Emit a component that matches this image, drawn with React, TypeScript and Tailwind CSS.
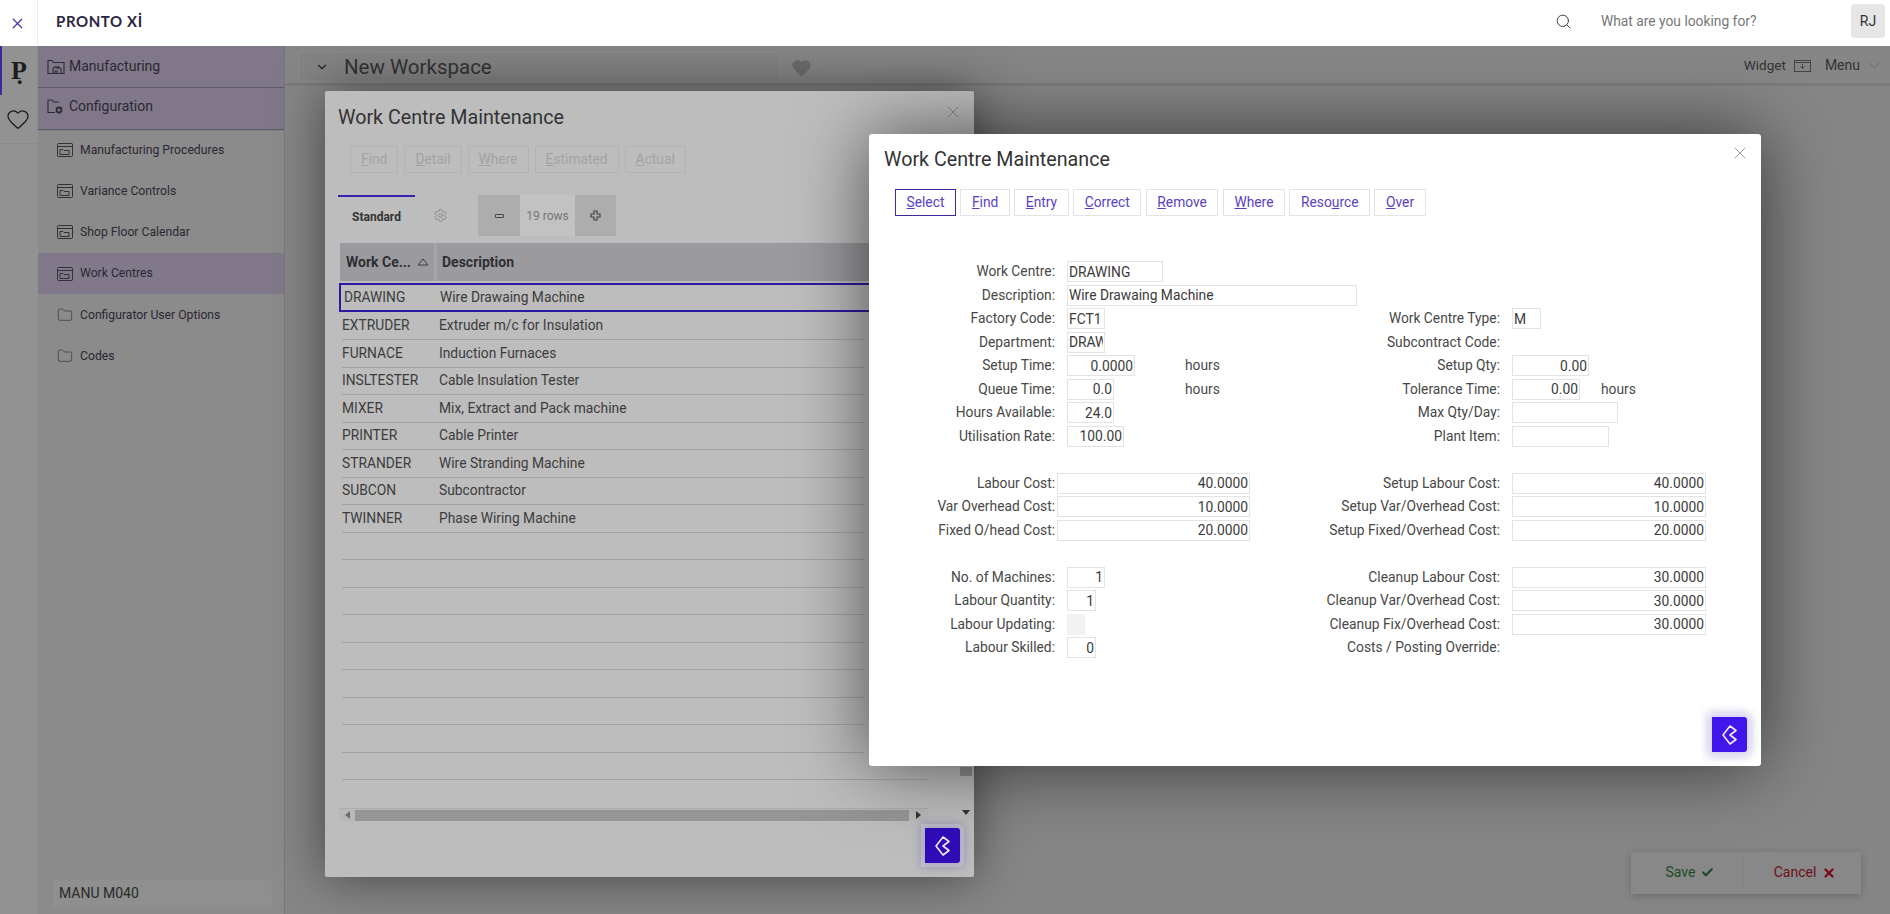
import { Check, ChevronDown, Folder, Heart, Search, Settings, X } from "lucide-react";

function WindowIcon() {
  return (
    <svg width="16" height="16" viewBox="0 0 16 16" fill="none" stroke="#33303a" strokeWidth="1" className="shrink-0">
      <rect x="0.5" y="1.5" width="15" height="13" rx="1" />
      <path d="M0.5 4.5h15" />
      <path d="M3 12.5v-5h3l1 1h5v4z" />
    </svg>
  );
}

function FactoryFolderIcon() {
  return (
    <svg width="18" height="16" viewBox="0 0 18 16" fill="none" stroke="#2e2a36" strokeWidth="1.1" className="shrink-0">
      <path d="M1 14.5v-13h4l1.5 2h10.5v11z" />
      <path d="M6 14.5v-5l2.5-2 2.500 2v-2l3 2v5" />
      <path d="M8 14.500v-2.500h2v2.500" />
    </svg>
  );
}

function GearFolderIcon() {
  return (
    <svg width="18" height="16" viewBox="0 0 18 16" fill="none" stroke="#2e2a36" strokeWidth="1.1" className="shrink-0">
      <path d="M8 13.500H1V1h4l1.500 2H12" />
      <circle cx="12" cy="11" r="2.500" strokeWidth="1.800" />
    </svg>
  );
}

function BackButton({ className }: { className: string }) {
  return (
    <button
      aria-label="Back"
      className={`absolute right-[14px] bottom-[14px] flex h-[35px] w-[35px] items-center justify-center rounded-r-[3px] shadow-[0_0_0_4px_rgba(255,255,255,0.22),0_0_10px_4px_rgba(60,40,160,0.3)] ${className}`}
    >
      <svg width="15" height="20" viewBox="0 0 15 20" fill="none" stroke="#f1edff" strokeWidth="1.600" strokeLinejoin="round">
        <path d="M8 1 1 10l7 9 6-4.500L8 10l6-4.500z" />
      </svg>
    </button>
  );
}

function ActionButton({ children, active }: { children: React.ReactNode; active?: boolean }) {
  return (
    <button
      className={`h-[27px] px-[10.500px] text-[13.800px] text-[#5a3fc6] ${active ? "border border-[#3b2ba3]" : "border border-[#e4e4e4]"}`}
    >
      {children}
    </button>
  );
}

function MutedButton({ children }: { children: React.ReactNode }) {
  return <button className="h-[27px] border border-[#b4b4b4] px-[10px] text-[13.800px] text-[#a3a3a3]">{children}</button>;
}

type FieldProps = {
  label?: string;
  value?: string;
  width?: string;
  right?: boolean;
  unit?: boolean;
  tight?: boolean;
  labelWidth: string;
  filled?: boolean;
};

function Field({ label, value = "", width, right, unit, tight, labelWidth, filled }: FieldProps) {
  return (
    <div className="flex h-[23.500px] items-center text-[13.800px] text-[#474747]">
      <span className={`shrink-0 text-right ${labelWidth}`}>{label}</span>
      {width && (
        <div className={`flex ${tight ? "ml-[2px]" : "ml-[12px]"} ${unit ? "w-[118px]" : ""}`}>
          <input
            readOnly
            value={value}
            aria-label={label}
            className={`h-[21px] px-[1px] text-[13.800px] text-[#3a3a3a] outline-none ${width} ${right ? "text-right" : ""} ${filled ? "bg-[#f2f2f2]" : "border border-[#e3e3e3]"}`}
          />
        </div>
      )}
      {unit && <span className="text-[#4a4a4a]">hours</span>}
    </div>
  );
}

const rows = [
  ["DRAWING", "Wire Drawaing Machine"],
  ["EXTRUDER", "Extruder m/c for Insulation"],
  ["FURNACE", "Induction Furnaces"],
  ["INSLTESTER", "Cable Insulation Tester"],
  ["MIXER", "Mix, Extract and Pack machine"],
  ["PRINTER", "Cable Printer"],
  ["STRANDER", "Wire Stranding Machine"],
  ["SUBCON", "Subcontractor"],
  ["TWINNER", "Phase Wiring Machine"],
  ...Array.from({ length: 9 }, () => ["", ""]),
];

const navItems = [
  { name: "Manufacturing Procedures", icon: "window" },
  { name: "Variance Controls", icon: "window" },
  { name: "Shop Floor Calendar", icon: "window" },
  { name: "Work Centres", icon: "window", active: true },
  { name: "Configurator User Options", icon: "folder" },
  { name: "Codes", icon: "folder" },
];

const LEFT = "w-[186px]";
const RIGHT = "w-[240px]";

function ListModal() {
  return (
    <section className="absolute top-[91px] left-[325px] flex h-[786px] w-[649px] flex-col rounded-[2px] bg-[#bdbdbd] pl-[13px] shadow-[0_0_50px_rgba(0,0,0,0.5)]">
      <h2 className="mt-[15px] h-[24px] text-[19.700px] leading-[24px] text-[#333]">Work Centre Maintenance</h2>
      <X size={20} strokeWidth={1} className="absolute top-[11px] right-[11px] text-[#808080]" />
      <div className="mt-[16px] ml-[12px] flex gap-[6px]">
        <MutedButton><u>F</u>ind</MutedButton>
        <MutedButton><u>D</u>etail</MutedButton>
        <MutedButton><u>W</u>here</MutedButton>
        <MutedButton><u>E</u>stimated</MutedButton>
        <MutedButton><u>A</u>ctual</MutedButton>
      </div>
      <div className="mt-[22px] flex h-[41px]">
        <div className="flex w-[77px] items-center justify-center border-t-2 border-[#3a20ae] text-[12px] font-bold text-[#333]">Standard</div>
        <div className="flex w-[63px] items-center justify-center pr-[12px]">
          <Settings size={15} strokeWidth={1} className="text-[#6e6e6e]" />
        </div>
        <button aria-label="Fewer rows" className="flex w-[42px] items-center justify-center bg-[#adadad]">
          <span className="h-[4px] w-[9px] rounded-[1px] border border-[#444]" />
        </button>
        <div className="flex w-[55px] items-center justify-center bg-[#c2c2c2] text-[12px] text-[#777]">19 rows</div>
        <button aria-label="More rows" className="flex w-[41px] items-center justify-center bg-[#adadad]">
          <svg width="11" height="11" viewBox="0 0 11 11" fill="none" stroke="#444" strokeWidth="1.200">
            <path d="M4 1h3v3h3v3H7v3H4V7H1V4h3z" />
          </svg>
        </button>
      </div>
      <div className="relative mt-[7px] ml-[2px] flex h-[38px] w-[618px] bg-[#9b9b9f] text-[14px] font-bold text-[#2f2f33]">
        <div className="flex w-[97px] items-center justify-between border-r-[3px] border-[#a5a5a8] pr-[5px] pl-[6px]">
          <span>Work Ce...</span>
          <svg width="12" height="8" viewBox="0 0 12 8" fill="none" stroke="#3a3a3a" strokeWidth="1">
            <path d="M6 1 1 7h10z" />
          </svg>
        </div>
        <div className="flex items-center pl-[5px]">Description</div>
      </div>
      <div className="mt-[2px] flex w-[631px] flex-col text-[13.800px] text-[#3c3c3c]">
        {rows.map(([code, desc], i) =>
          i === 0 ? (
            <div key={i} className="ml-[1px] flex h-[29px] items-center border-2 border-[#2a1aa0]">
              <span className="w-[99px] shrink-0 pl-[3px]">{code}</span>
              <span>{desc}</span>
            </div>
          ) : (
            <div key={i} className={`ml-[4px] flex items-center border-b border-[#a3a3a3] ${i === 1 ? "h-[28px]" : "h-[27.500px]"} ${i === 17 ? "w-[585px]" : "w-[522px]"}`}>
              <span className="w-[97px] shrink-0">{code}</span>
              <span>{desc}</span>
            </div>
          ),
        )}
      </div>
      <div className="mt-[28px] ml-[1px] flex h-[13px] w-[589px] items-center border-t border-[#adadad] bg-[#b8b8b8]">
        <span className="flex w-[16px] justify-center">
          <svg width="5" height="8" viewBox="0 0 5 8" fill="#6d6d6d"><path d="M5 0v8L0 4z" /></svg>
        </span>
        <span className="h-[11px] flex-1 bg-[#959595]" />
        <span className="flex w-[19px] justify-center">
          <svg width="5" height="8" viewBox="0 0 5 8" fill="#333"><path d="M0 0v8l5-4z" /></svg>
        </span>
      </div>
      <div className="absolute top-[676px] right-[2px] h-[9px] w-[12px] bg-[#8f8f8f]" />
      <svg width="8" height="5" viewBox="0 0 8 5" fill="#333" className="absolute top-[719px] right-[4px]"><path d="M0 0h8L4 5z" /></svg>
      <BackButton className="bg-[#2f0cb8]" />
    </section>
  );
}

function EditModal() {
  return (
    <section className="absolute top-[134px] left-[869px] h-[632px] w-[892px] rounded-[3px] bg-white pt-[14px] shadow-[0_0_75px_rgba(0,0,0,0.6)]">
      <h2 className="ml-[15px] h-[24px] text-[19.700px] leading-[24px] text-[#333]">Work Centre Maintenance</h2>
      <X size={20} strokeWidth={1} className="absolute top-[9px] right-[11px] text-[#8a8a8a]" />
      <div className="mt-[17px] ml-[26px] flex gap-[4.500px]">
        <ActionButton active><u>S</u>elect</ActionButton>
        <ActionButton><u>F</u>ind</ActionButton>
        <ActionButton><u>E</u>ntry</ActionButton>
        <ActionButton><u>C</u>orrect</ActionButton>
        <ActionButton><u>R</u>emove</ActionButton>
        <ActionButton><u>W</u>here</ActionButton>
        <ActionButton>Reso<u>u</u>rce</ActionButton>
        <ActionButton><u>O</u>ver</ActionButton>
      </div>
      <div className="mt-[44px] flex">
        <div className="flex w-[391px] flex-col gap-[23.500px]">
          <div>
            <Field labelWidth={LEFT} label="Work Centre:" value="DRAWING" width="w-[96px]" />
            <Field labelWidth={LEFT} label="Description:" value="Wire Drawaing Machine" width="w-[290px]" />
            <Field labelWidth={LEFT} label="Factory Code:" value="FCT1" width="w-[38px]" />
            <Field labelWidth={LEFT} label="Department:" value="DRAWING" width="w-[38px]" />
            <Field labelWidth={LEFT} label="Setup Time:" value="0.0000" width="w-[68px]" right unit />
            <Field labelWidth={LEFT} label="Queue Time:" value="0.0" width="w-[47px]" right unit />
            <Field labelWidth={LEFT} label="Hours Available:" value="24.0" width="w-[47px]" right />
            <Field labelWidth={LEFT} label="Utilisation Rate:" value="100.00" width="w-[57px]" right />
          </div>
          <div>
            <Field labelWidth={LEFT} label="Labour Cost:" value="40.0000" width="w-[193px]" right tight />
            <Field labelWidth={LEFT} label="Var Overhead Cost:" value="10.0000" width="w-[193px]" right tight />
            <Field labelWidth={LEFT} label="Fixed O/head Cost:" value="20.0000" width="w-[193px]" right tight />
          </div>
          <div>
            <Field labelWidth={LEFT} label="No. of Machines:" value="1" width="w-[38px]" right />
            <Field labelWidth={LEFT} label="Labour Quantity:" value="1" width="w-[29px]" right />
            <Field labelWidth={LEFT} label="Labour Updating:" width="w-[18px]" filled />
            <Field labelWidth={LEFT} label="Labour Skilled:" value="0" width="w-[29px]" right />
          </div>
        </div>
        <div className="flex flex-col gap-[23.500px]">
          <div>
            <div className="h-[47px]" />
            <Field labelWidth={RIGHT} label="Work Centre Type:" value="M" width="w-[29px]" />
            <Field labelWidth={RIGHT} label="Subcontract Code:" />
            <Field labelWidth={RIGHT} label="Setup Qty:" value="0.00" width="w-[77px]" right />
            <div className="flex items-center">
              <Field labelWidth={RIGHT} label="Tolerance Time:" value="0.00" width="w-[68px]" right />
              <span className="ml-[21px] text-[13.800px] text-[#4a4a4a]">hours</span>
            </div>
            <Field labelWidth={RIGHT} label="Max Qty/Day:" width="w-[106px]" />
            <Field labelWidth={RIGHT} label="Plant Item:" width="w-[97px]" />
          </div>
          <div>
            <Field labelWidth={RIGHT} label="Setup Labour Cost:" value="40.0000" width="w-[194px]" right />
            <Field labelWidth={RIGHT} label="Setup Var/Overhead Cost:" value="10.0000" width="w-[194px]" right />
            <Field labelWidth={RIGHT} label="Setup Fixed/Overhead Cost:" value="20.0000" width="w-[194px]" right />
          </div>
          <div>
            <Field labelWidth={RIGHT} label="Cleanup Labour Cost:" value="30.0000" width="w-[194px]" right />
            <Field labelWidth={RIGHT} label="Cleanup Var/Overhead Cost:" value="30.0000" width="w-[194px]" right />
            <Field labelWidth={RIGHT} label="Cleanup Fix/Overhead Cost:" value="30.0000" width="w-[194px]" right />
            <Field labelWidth={RIGHT} label="Costs / Posting Override:" />
          </div>
        </div>
      </div>
      <BackButton className="bg-[#4116ea]" />
    </section>
  );
}

export default function App() {
  return (
    <div className="relative h-[914px] w-[1890px] overflow-hidden bg-[#868686] font-['Roboto',sans-serif]">
      <header className="relative z-20 flex h-[46px] items-center bg-white pb-[4px]">
        <div className="flex h-[46px] w-[38px] items-center justify-center self-start border-r border-[#ececec] pr-[2px]">
          <X size={17} strokeWidth={1.700} className="text-[#3f35b5]" />
        </div>
        <span className="ml-[18px] font-['Lato',sans-serif] text-[15px] font-bold tracking-[0.6px] text-[#2c2440]">P̣RONTO Xİ</span>
        <Search size={17} strokeWidth={1.300} className="ml-auto text-[#333]" />
        <span className="ml-[29px] w-[250px] text-[13.800px] text-[#777]">What are you looking for?</span>
        <div className="mr-[5px] flex h-[34px] w-[34px] items-center justify-center rounded-[4px] bg-[#e6e6e6] text-[14px] text-[#333]">RJ</div>
      </header>

      <div className="flex h-[868px]">
        <nav className="flex w-[38px] shrink-0 flex-col bg-[#929292]">
          <div className="flex h-[49px] items-center justify-center border-l-2 border-[#3a2a9e] pr-[2px] font-['Liberation_Serif',serif] text-[26px] font-bold text-[#1d1d1d]">P̣</div>
          <div className="flex h-[49px] items-center justify-center border-b border-[#8a8a8a] pr-[3px]">
            <Heart size={24} strokeWidth={1.300} className="text-[#1d1d1d]" />
          </div>
        </nav>

        <aside className="relative flex w-[247px] shrink-0 flex-col border-r border-[#7a7a7a] bg-[#8b8b8b] text-[#2b2833]">
          <div className="flex h-[41px] items-center gap-[4px] bg-[#807889] pl-[9px] text-[14px] shadow-[0_1px_1px_#5f5b66]">
            <FactoryFolderIcon />
            Manufacturing
          </div>
          <div className="mt-[1px] flex h-[41px] items-center gap-[4px] bg-[#807889] pb-[4px] pl-[9px] text-[14px] shadow-[0_1px_1px_#5f5b66]">
            <GearFolderIcon />
            Configuration
          </div>
          <ul className="text-[12.200px]">
            {navItems.map((item) => (
              <li key={item.name} className={`flex h-[41.300px] items-center gap-[7px] pl-[19px] ${item.active ? "bg-[#817989]" : ""}`}>
                {item.icon === "window" ? <WindowIcon /> : <Folder size={16} strokeWidth={1} className="shrink-0 text-[#33303a]" />}
                {item.name}
              </li>
            ))}
          </ul>
          <div className="absolute right-[12px] bottom-[7px] left-[15px] flex h-[27px] items-center bg-[#8f8f8f] pl-[6px] text-[14px] text-[#2a2a2a]">MANU M040</div>
        </aside>

        <main className="flex-1">
          <div className="flex h-[40px] items-center border-b-[3px] border-[#7b7b7b] pt-[2px] pr-[6px] pl-[13px]">
            <div className="mt-[3px] flex h-[30px] w-[482px] items-center border border-[#8b8b8b] bg-[#848484] pl-[16px]">
              <ChevronDown size={14} strokeWidth={2} className="text-[#222]" />
              <span className="ml-[15px] text-[20.500px] leading-none text-[#333]">New Workspace</span>
            </div>
            <Heart size={21} strokeWidth={1} className="mt-[3px] ml-[11px] fill-[#6d6d6d] text-[#6d6d6d]" />
            <span className="ml-auto text-[13.500px] text-[#333]">Widget</span>
            <svg width="17" height="12" viewBox="0 0 17 12" fill="none" stroke="#444" strokeWidth="1" className="ml-[8px]">
              <rect x="0.500" y="0.500" width="16" height="11" />
              <path d="M0.500 2.500h16M8.500 4v4M6.500 6.500l2 2 2-2" />
            </svg>
            <span className="ml-[14px] text-[14px] text-[#333]">Menu</span>
            <ChevronDown size={19} strokeWidth={0.8} className="ml-[5px] text-[#555]" />
          </div>
        </main>
      </div>

      <ListModal />
      <EditModal />

      <div className="absolute top-[852px] left-[1631px] flex h-[42px] w-[230px] items-center bg-[#888889] pb-[1px] text-[14px] shadow-[0_2px_8px_rgba(0,0,0,0.22)]">
        <div className="flex h-full w-[113px] items-center justify-center gap-[6px] border-r border-[#848485] pl-[6px] text-[#1f4a25]">
          Save
          <Check size={13} strokeWidth={4} className="text-[#1f4a25]" />
        </div>
        <div className="flex h-full flex-1 items-center justify-center gap-[6px] pl-[5px] text-[#6e0f1a]">
          Cancel
          <X size={14} strokeWidth={4} className="text-[#7a0b16]" />
        </div>
      </div>
    </div>
  );
}
